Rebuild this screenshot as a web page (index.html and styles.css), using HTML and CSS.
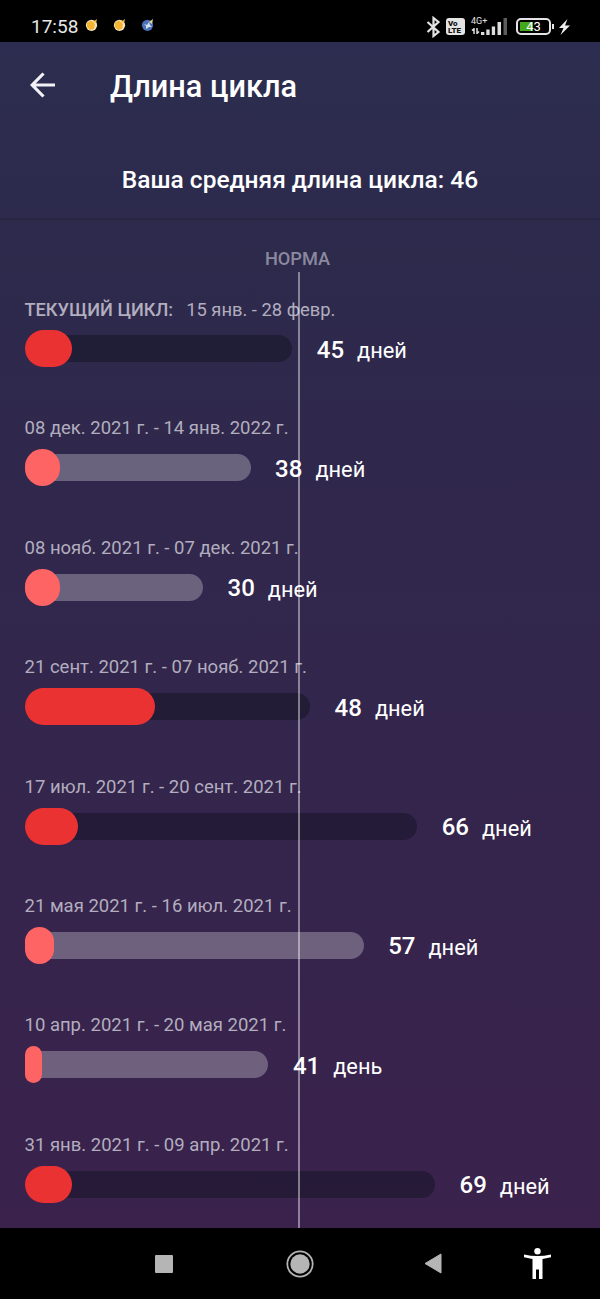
FILE: index.html
```html
<!DOCTYPE html>
<html lang="ru">
<head>
    <meta charset="UTF-8">
    <meta name="viewport" content="width=device-width, initial-scale=1.0">
    <title>Длина цикла</title>
    <link rel="stylesheet" href="styles.css">
</head>
<body>
    <div class="status-bar">
        <span class="clock">17:58</span>
        <div class="notifications">
            <svg width="14" height="14" viewBox="0 0 14 14">
                <circle cx="6.5" cy="7.3" r="5.6" fill="#f8e3c0"/>
                <path d="M2 4.500l4-2 4 3.500-1 5-4 1-3-3z" fill="#f3b52f"/>
                <path d="M8 4l4-3-1 4z" fill="#f7c437"/>
            </svg>
            <svg width="14" height="14" viewBox="0 0 14 14">
                <circle cx="6.5" cy="7.3" r="5.6" fill="#f8e3c0"/>
                <path d="M2 4.500l4-2 4 3.500-1 5-4 1-3-3z" fill="#f3b52f"/>
                <path d="M8 4l4-3-1 4z" fill="#f7c437"/>
            </svg>
            <svg width="14" height="14" viewBox="0 0 14 14">
                <circle cx="6.5" cy="7.3" r="5.6" fill="#4a72b8"/>
                <path d="M3 6l3 1 2-3 1 3 2 2-3 0-3 2 0-3z" fill="#d5e0ee"/>
                <path d="M8 4l4-3-1 5z" fill="#e6d597"/>
            </svg>
        </div>
        <div class="system-icons">
            <svg class="bluetooth" width="15" height="22" viewBox="0 0 15 22">
                <path d="M1.500 6l11 10L7.500 20V2L12.500 6l-11 10" fill="none" stroke="#e4e4e4" stroke-width="2.200"/>
            </svg>
            <div class="volte"><span>Vo</span><span>LTE</span></div>
            <div class="signal">
                <span class="network">4G+</span>
                <svg width="37" height="17" viewBox="0 0 37 17">
                    <path d="M3 10v6M1 12.500l2-2M6 10v6M8 13.500l-2 2" stroke="#dedede" stroke-width="1.500" fill="none"/>
                    <path d="M10 14h3.300v3H10zM15.300 11.500h3.300V17h-3.300zM20.800 8.500h3.300V17h-3.300zM26.500 4h3.500v13h-3.500z" fill="#dedede"/>
                    <path d="M32.500 0H36v17h-3.500z" fill="#5c5c5c"/>
                </svg>
            </div>
            <div class="battery"><span>43</span></div>
            <svg class="bolt" width="11" height="16" viewBox="0 0 11 16">
                <path d="M8.500 0L0 9h4.500L1.500 16 11 6.500H6z" fill="#eee"/>
            </svg>
        </div>
    </div>

    <div class="screen">
        <header class="toolbar">
            <svg class="back" width="26" height="26" viewBox="0 0 26 26">
                <path d="M13.500 1.500L2.200 13l11.300 11.500M2.200 13h22.800" fill="none" stroke="#f2f2f6" stroke-width="3.200"/>
            </svg>
            <h1>Длина цикла</h1>
        </header>
        <p class="average">Ваша средняя длина цикла: 46</p>

        <main class="chart">
            <div class="norm-label">НОРМА</div>
            <div class="norm-line"></div>

            <div class="cycle current irregular">
                <div class="dates"><b>ТЕКУЩИЙ ЦИКЛ:</b>15 янв. - 28 февр.</div>
                <div class="row">
                    <div class="bar" style="--days: 45"><div class="period" style="--days: 8"></div></div>
                    <b class="days">45</b><span class="unit">дней</span>
                </div>
            </div>
            <div class="cycle">
                <div class="dates">08 дек. 2021 г. - 14 янв. 2022 г.</div>
                <div class="row">
                    <div class="bar" style="--days: 38"><div class="period" style="--days: 6"></div></div>
                    <b class="days">38</b><span class="unit">дней</span>
                </div>
            </div>
            <div class="cycle">
                <div class="dates">08 нояб. 2021 г. - 07 дек. 2021 г.</div>
                <div class="row">
                    <div class="bar" style="--days: 30"><div class="period" style="--days: 6"></div></div>
                    <b class="days">30</b><span class="unit">дней</span>
                </div>
            </div>
            <div class="cycle irregular">
                <div class="dates">21 сент. 2021 г. - 07 нояб. 2021 г.</div>
                <div class="row">
                    <div class="bar" style="--days: 48"><div class="period" style="--days: 22"></div></div>
                    <b class="days">48</b><span class="unit">дней</span>
                </div>
            </div>
            <div class="cycle irregular">
                <div class="dates">17 июл. 2021 г. - 20 сент. 2021 г.</div>
                <div class="row">
                    <div class="bar" style="--days: 66"><div class="period" style="--days: 9"></div></div>
                    <b class="days">66</b><span class="unit">дней</span>
                </div>
            </div>
            <div class="cycle">
                <div class="dates">21 мая 2021 г. - 16 июл. 2021 г.</div>
                <div class="row">
                    <div class="bar" style="--days: 57"><div class="period" style="--days: 5"></div></div>
                    <b class="days">57</b><span class="unit">дней</span>
                </div>
            </div>
            <div class="cycle">
                <div class="dates">10 апр. 2021 г. - 20 мая 2021 г.</div>
                <div class="row">
                    <div class="bar" style="--days: 41"><div class="period" style="--days: 3"></div></div>
                    <b class="days">41</b><span class="unit">день</span>
                </div>
            </div>
            <div class="cycle irregular">
                <div class="dates">31 янв. 2021 г. - 09 апр. 2021 г.</div>
                <div class="row">
                    <div class="bar" style="--days: 69"><div class="period" style="--days: 8"></div></div>
                    <b class="days">69</b><span class="unit">дней</span>
                </div>
            </div>
        </main>
    </div>

    <nav class="nav-bar">
        <svg class="recent" width="18" height="18" viewBox="0 0 18 18">
            <rect width="18" height="18" rx="1" fill="#b5b5b5"/>
        </svg>
        <svg class="home" width="28" height="28" viewBox="0 0 28 28">
            <circle cx="14" cy="14" r="12.700" fill="none" stroke="#b5b5b5" stroke-width="1.800"/>
            <circle cx="14" cy="14" r="9.700" fill="#b5b5b5"/>
        </svg>
        <svg class="return" width="18" height="21" viewBox="0 0 18 21">
            <path d="M17 1v19L1 10.500z" fill="#b5b5b5" stroke="#b5b5b5" stroke-width="1" stroke-linejoin="round"/>
        </svg>
        <svg class="accessibility" width="27" height="31" viewBox="0 0 27 31">
            <circle cx="13.500" cy="3.300" r="3.200" fill="#fff"/>
            <path d="M0 6.500Q13.500 9.500 27 6.500V9.300L18.500 11V31H15V21.500H12V31H8.500V11L0 9.300z" fill="#fff"/>
        </svg>
    </nav>
</body>
</html>
```
FILE: styles.css
```css
* {
    box-sizing: border-box;
}

body {
    margin: 0;
    width: 600px;
    height: 1299px;
    display: flex;
    flex-direction: column;
    font-family: Roboto, "Noto Sans", sans-serif;
    background: #000;
    color: #fff;
    overflow: hidden;
}

svg {
    display: block;
    flex: none;
}

/* Android status bar */
.status-bar {
    height: 42px;
    padding: 11px 30px 0 31px;
    display: flex;
    align-items: center;
}

.clock {
    font-size: 19px;
    line-height: 30px;
    width: 54px;
    color: #e8e8e8;
}

.notifications {
    display: flex;
    gap: 14px;
    margin-top: -3px;
}

.system-icons {
    display: flex;
    align-items: center;
    margin-left: auto;
}

.volte {
    width: 19px;
    height: 17px;
    margin-left: 5px;
    border-radius: 3px;
    background: #e4e4e4;
    color: #111;
    font-size: 8px;
    font-weight: 900;
    line-height: 7px;
    padding: 2px 0 0 2px;
    display: flex;
    flex-direction: column;
}

.signal {
    position: relative;
    margin-left: 6px;
}

.network {
    position: absolute;
    left: 0;
    top: -2px;
    font-size: 9px;
    line-height: 10px;
    color: #e4e4e4;
}

.battery {
    position: relative;
    width: 35px;
    height: 17px;
    margin-left: 8px;
    border: 2px solid #e4e4e4;
    border-radius: 5px;
    padding: 2px;
    background: linear-gradient(90deg, #45a81c 13px, transparent 13px) 2px 2px / 27px 9px no-repeat;
    display: flex;
    align-items: center;
    justify-content: center;
    font-size: 13px;
    font-weight: 400;
}

.battery::after {
    content: "";
    position: absolute;
    right: -5px;
    top: 4px;
    width: 2px;
    height: 5px;
    background: #e4e4e4;
}

.bolt {
    margin-left: 8px;
}

/* App screen */
.screen {
    height: 1186px;
    background: linear-gradient(180deg, #2c2d50 0%, #2d2a4c 18%, #33264c 55%, #3a224c 100%);
}

.toolbar {
    height: 88px;
    padding-left: 30px;
    display: flex;
    align-items: center;
}

.back {
    margin-top: -2px;
}

h1 {
    margin: 0 0 0 54px;
    font-size: 30.7px;
    font-weight: 500;
}

.average {
    margin: 0;
    height: 90px;
    padding-top: 34px;
    font-size: 24.5px;
    font-weight: 500;
    line-height: 32px;
    text-align: center;
    border-bottom: 2px solid #272744;
}

.chart {
    position: relative;
    height: 1008px;
    padding: 28px 24.5px 0;
    display: flow-root;
}

.norm-label {
    width: 100px;
    margin-left: 223px;
    font-size: 18.2px;
    font-weight: 500;
    line-height: 22px;
    text-align: center;
    color: #8b899f;
}

/* Drawn over the bars */
.norm-line {
    position: absolute;
    z-index: 1;
    left: 298px;
    top: 52px;
    bottom: 0;
    width: 1.5px;
    background: rgba(255, 255, 255, 0.43);
}

.cycle {
    height: 119.4px;
}

.current {
    margin-top: 28px;
}

.dates {
    font-size: 18.5px;
    line-height: 23px;
    color: #b2aebf;
    white-space: nowrap;
}

.current .dates {
    font-size: 18.35px;
}

.dates b {
    font-weight: 500;
    font-size: 18.2px;
    margin-right: 13px;
}

.row {
    display: flex;
    align-items: center;
    height: 37px;
    margin-top: 9px;
}

.bar {
    width: calc(var(--days) * 5.95px);
    height: 27px;
    border-radius: 14px;
    background: rgba(255, 255, 255, 0.28);
    display: flex;
    align-items: center;
}

.period {
    width: calc(var(--days) * 5.95px);
    height: 37px;
    flex: none;
    border-radius: 18.5px;
    background: #ff6464;
}

/* Cycles outside the usual range */
.irregular .bar {
    background: rgba(17, 17, 34, 0.5);
}

.irregular .period {
    background: #eb3232;
}

.days {
    margin-left: 24.5px;
    padding-top: 2px;
    font-size: 24px;
    font-weight: 500;
}

.unit {
    margin-left: 13px;
    padding-top: 4px;
    font-size: 21.8px;
}

/* Android navigation */
.nav-bar {
    height: 71px;
    padding-left: 155px;
    display: flex;
    align-items: center;
}

.home {
    margin-left: 113px;
}

.return {
    margin-left: 110px;
}

.accessibility {
    margin-left: 82px;
}
```
